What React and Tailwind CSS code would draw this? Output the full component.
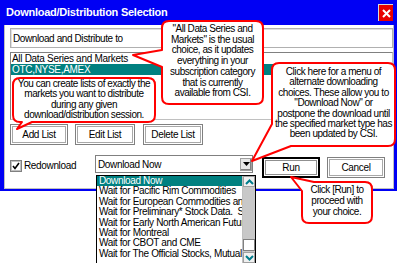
import React from "react";

const dropdownItems = [
  "Download Now",
  "Wait for Pacific Rim Commodities",
  "Wait for European Commodities and Indices",
  "Wait for Preliminary* Stock Data.  Series",
  "Wait for Early North American Futures",
  "Wait for Montreal",
  "Wait for CBOT and CME",
  "Wait for The Official Stocks, Mutual Funds",
];

const callouts = [
  {
    id: "lists",
    box: "left-[14px] top-[79px] w-[140px]",
    leading: "leading-[10.4px]",
    lines: [
      "You can create lists of exactly the",
      "markets you want to distribute",
      "during any given",
      "download/distribution session.",
    ],
  },
  {
    id: "all",
    box: "left-[163px] top-[24px] w-[99px]",
    leading: "leading-[10.7px]",
    lines: [
      "\"All Data Series and",
      "Markets\" is the usual",
      "choice, as it updates",
      "everything in your",
      "subscription category",
      "that is currently",
      "available from CSI.",
    ],
  },
  {
    id: "menu",
    box: "left-[273px] top-[67px] w-[121px]",
    leading: "leading-[10.4px]",
    lines: [
      "Click here for a menu of",
      "alternate downloading",
      "choices. These allow you to",
      "\"Download Now\" or",
      "postpone the download until",
      "the specified market type has",
      "been updated by CSI.",
    ],
  },
  {
    id: "run",
    box: "left-[303px] top-[184px] w-[68px]",
    leading: "leading-[11px]",
    lines: ["Click [Run] to", "proceed with", "your choice."],
  },
];

const bubblePaths = [
  "M20,78 H148 Q155,78 155,85 V115 Q155,122 148,122 H32 L17,129 L22,122 H20 Q13,122 13,115 V85 Q13,78 20,78 Z",
  "M169,21 H256 Q263,21 263,28 V97 Q263,104 256,104 H169 Q162,104 162,97 V67 L133,55 L162,50 V28 Q162,21 169,21 Z",
  "M279,63 H388 Q395,63 395,70 V139 Q395,146 388,146 H291 L252,161 L272,124 V70 Q272,63 279,63 Z",
  "M314,182 H365 Q372,182 372,189 V216 Q372,223 365,223 H309 Q302,223 302,216 V191 L291,177 L314,182 Z",
];

const DlgButton = ({ label, className = "", isDefault }) => (
  <button
    type="button"
    className={`flex items-center justify-center bg-white text-[10px] tracking-[-0.35px] ${
      isDefault
        ? "border-2 border-black shadow-[inset_0_0_0_1px_#fff,inset_0_0_0_2px_#909090]"
        : "border border-[#808080] shadow-[inset_0_0_0_1px_#fff,inset_0_0_0_2px_#a8a8a8]"
    } ${className}`}
  >
    {label}
  </button>
);

const ArrowIcon = ({ up }) => (
  <svg width="9" height="6" viewBox="0 0 9 6">
    <path
      d={up ? "M1,5 L4.5,1.5 L8,5" : "M1,1 L4.5,4.5 L8,1"}
      fill="none"
      stroke="#007c8c"
      strokeWidth="2"
    />
  </svg>
);

const DropList = () => (
  <div className="absolute left-0 top-[19px] z-10 flex h-[89px] w-[160px] border border-black bg-white">
    <div className="min-w-0 flex-1 overflow-hidden">
      {dropdownItems.map((item, i) => (
        <div
          key={item}
          className={`h-[10.4px] whitespace-pre pl-[2px] text-[10px] leading-[10.4px] tracking-[-0.35px] ${
            i === 0 ? "bg-[#008080] text-white" : "text-black"
          }`}
        >
          {item}
        </div>
      ))}
    </div>
    <div className="flex w-[13px] flex-col border-l border-[#c0c0c0] bg-[#c8c8c8]">
      <div className="flex h-[11px] items-center justify-center border border-[#a0a0a0] bg-[#f0f0f0]">
        <ArrowIcon up />
      </div>
      <div className="flex flex-1 flex-col justify-end">
        <div className="mb-[1px] h-[12px] border border-[#808080] bg-white" />
      </div>
      <div className="flex h-[11px] items-center justify-center border border-[#a0a0a0] bg-[#f0f0f0]">
        <ArrowIcon />
      </div>
    </div>
  </div>
);

export default function App() {
  return (
    <div className="relative h-[263px] w-[400px] overflow-hidden bg-white font-['Liberation_Sans',Arial,sans-serif] text-black">
      <div className="flex h-[191px] w-[397px] flex-col bg-[#0000f4] pb-[2px] pl-[4px] pr-[3px]">
        <div className="flex h-[25px] items-center justify-between pl-[2px] pr-[1px]">
          <span className="text-[11px] font-bold tracking-[-0.25px] text-white">
            Download/Distribution Selection
          </span>
          <div className="flex h-[17px] w-[15px] items-center justify-center border-l border-t border-[#d8d8d8] border-b-[#600000] border-r-[#600000] bg-[#e80000]">
            <svg width="9" height="9" viewBox="0 0 9 9">
              <path d="M1,1 L8,8 M8,1 L1,8" stroke="#fff" strokeWidth="2" />
            </svg>
          </div>
        </div>

        <div className="flex flex-1 flex-col border-b border-l border-r border-[#c0c0c0] bg-white pl-[5px] pt-[3px]">
          <div className="flex h-[20px] w-[383px] items-center border border-[#b0b0b0] pl-[2px] text-[10px] tracking-[-0.4px] shadow-[inset_1px_1px_0_#e0e0e0]">
            Download and Distribute to
          </div>

          <div className="mt-[4px] h-[68px] w-[383px] border border-[#808080] border-r-[#c0c0c0] border-b-[#c0c0c0] pt-[1px] text-[10px] tracking-[-0.3px]">
            <div className="h-[10px] pl-[1px] leading-[10px]">All Data Series and Markets</div>
            <div className="h-[11px] bg-[#008080] pl-[1px] leading-[11px] text-white">
              OTC,NYSE,AMEX
            </div>
          </div>

          <div className="mt-[4px] flex h-[21px]">
            <DlgButton label="Add List" className="w-[58px]" />
            <DlgButton label="Edit List" className="ml-[7px] w-[60px]" />
            <DlgButton label="Delete List" className="ml-[8px] w-[60px]" />
          </div>

          <div className="mt-[10px] flex items-start">
            <div className="mt-[3px] flex w-[85px] items-center gap-[2px]">
              <div className="flex h-[12px] w-[12px] items-center justify-center border border-[#808080] shadow-[inset_0_0_0_1px_#c0c0c0]">
                <svg width="8" height="8" viewBox="0 0 8 8">
                  <path d="M1,4 L3,6.5 L7,1" fill="none" stroke="#000" strokeWidth="1.6" />
                </svg>
              </div>
              <span className="text-[10px] tracking-[-0.35px]">Redownload</span>
            </div>

            <div className="relative flex h-[18px] w-[158px] items-center border border-[#808080] bg-white pl-[2px]">
              <span className="flex-1 text-[10px] tracking-[-0.35px]">Download Now</span>
              <div className="flex h-[13px] w-[12px] items-center justify-center border border-[#a0a0a0] bg-[#e8e8e8] shadow-[inset_-1px_-1px_0_#808080]">
                <svg width="7" height="4" viewBox="0 0 7 4">
                  <path d="M0,0 H7 L3.5,4 Z" fill="#000" />
                </svg>
              </div>
              <DropList />
            </div>

            <div className="ml-[9px] mt-[2px] flex">
              <DlgButton label="Run" className="h-[21px] w-[58px]" isDefault />
              <DlgButton label="Cancel" className="ml-[7px] h-[21px] w-[58px]" />
            </div>
          </div>
        </div>
      </div>

      <svg
        className="pointer-events-none absolute inset-0 z-20"
        width="400"
        height="263"
        viewBox="0 0 400 263"
      >
        {bubblePaths.map((d) => (
          <path key={d} d={d} fill="#fff" stroke="#ff0000" strokeWidth="2" strokeLinejoin="round" />
        ))}
      </svg>

      {callouts.map((c) => (
        <div
          key={c.id}
          className={`absolute z-30 text-center text-[10px] tracking-[-0.45px] ${c.box} ${c.leading}`}
        >
          {c.lines.map((line) => (
            <div key={line} className="whitespace-nowrap">
              {line}
            </div>
          ))}
        </div>
      ))}
    </div>
  );
}
